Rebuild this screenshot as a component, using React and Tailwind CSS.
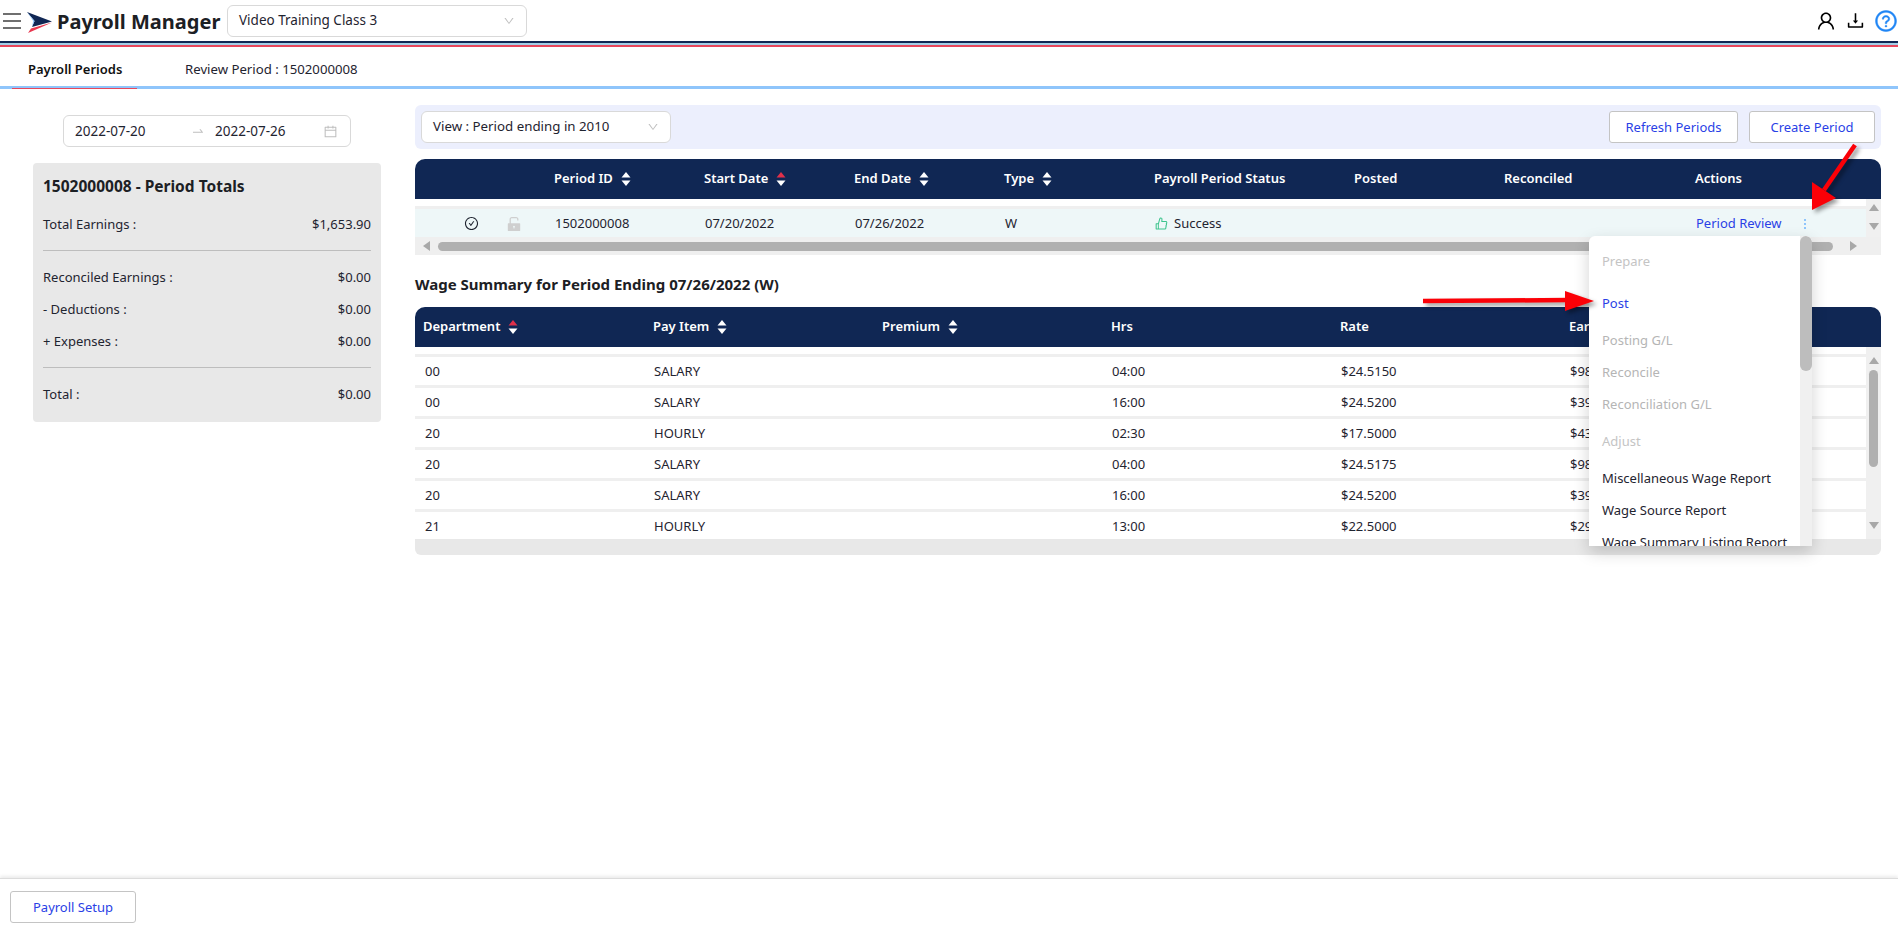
import {
  AiOutlineCalendar,
  AiOutlineCheckCircle,
  AiOutlineDown,
  AiOutlineDownload,
  AiOutlineLike,
  AiOutlineQuestionCircle,
  AiOutlineSwapRight,
  AiOutlineUser,
  AiFillUnlock,
} from 'react-icons/ai';

const wages = [
  ['00', 'SALARY', '04:00', '$24.5150', '$98.06'],
  ['00', 'SALARY', '16:00', '$24.5200', '$392.32'],
  ['20', 'HOURLY', '02:30', '$17.5000', '$43.75'],
  ['20', 'SALARY', '04:00', '$24.5175', '$98.07'],
  ['20', 'SALARY', '16:00', '$24.5200', '$392.32'],
  ['21', 'HOURLY', '13:00', '$22.5000', '$292.50'],
];

const menuItems = [
  { label: 'Prepare', cls: 'text-[#c4c4c4] h-[42px]' },
  { label: 'Post', cls: 'text-[#2a3fe6] h-[42px]' },
  { label: 'Posting G/L', cls: 'text-[#b5b5b5] h-[32px]' },
  { label: 'Reconcile', cls: 'text-[#b5b5b5] h-[32px]' },
  { label: 'Reconciliation G/L', cls: 'text-[#b5b5b5] h-[32px]' },
  { label: 'Adjust', cls: 'text-[#c4c4c4] h-[42px]' },
  { label: 'Miscellaneous Wage Report', cls: 'text-[#1f2430] h-[32px]' },
  { label: 'Wage Source Report', cls: 'text-[#1f2430] h-[32px]' },
  { label: 'Wage Summary Listing Report', cls: 'text-[#1f2430] h-[32px]' },
];

function SortIcon({ active }) {
  return (
    <svg width="10" height="14" viewBox="0 0 10 14" className="ml-2 shrink-0">
      <path d="M5 0 L9.5 5.5 H0.5 Z" fill={active ? '#e0304a' : '#ffffff'} />
      <path d="M5 14 L0.5 8.5 H9.5 Z" fill="#ffffff" />
    </svg>
  );
}

function HeadCell({ label, sort, active, className }) {
  return (
    <div className={`flex items-center pl-2 font-semibold ${className}`}>
      {label}
      {sort && <SortIcon active={active} />}
    </div>
  );
}

function Arrow({ className, x1, y1, x2, y2, w, h, head }) {
  return (
    <svg width={w} height={h} className={`absolute pointer-events-none drop-shadow-[3px_3px_2px_rgba(0,0,0,0.4)] ${className}`}>
      <line x1={x1} y1={y1} x2={x2} y2={y2} stroke="#fb0007" strokeWidth="4.5" />
      <polygon points={head} fill="#fb0007" />
    </svg>
  );
}

function ScrollArrow({ dir }) {
  const d = { up: 'M5 0 L10 7 H0 Z', down: 'M5 7 L0 0 H10 Z', left: 'M0 5 L7 0 V10 Z', right: 'M7 5 L0 0 V10 Z' }[dir];
  return (
    <svg width="10" height="10" viewBox="0 0 10 10" className="shrink-0">
      <path d={d} fill="#a8a8a8" />
    </svg>
  );
}

export default function App() {
  return (
    <div className="relative flex flex-col h-[933px] w-[1898px] overflow-hidden bg-white text-[13px] text-[#1f2430] font-['Noto_Sans',sans-serif]">
      {/* top bar */}
      <div className="flex items-center h-[41px] shrink-0">
        <div className="flex flex-col gap-[5px] ml-[3px] w-[18px]">
          <div className="h-[2px] bg-[#6f6f6f]" />
          <div className="h-[2px] bg-[#6f6f6f]" />
          <div className="h-[2px] bg-[#6f6f6f]" />
        </div>
        <svg width="25" height="21" viewBox="0 0 25 21" className="ml-[6px] mt-[3px]">
          <path d="M0 0 L25 9.5 L5 15 L7.5 9 Z" fill="#102754" />
          <path d="M1 21 L25 10.5 L4 16.5 Z" fill="#e8374f" />
          <path d="M0 0 L7.5 9 L5 15 L6.2 9 Z" fill="#8fc5fb" />
        </svg>
        <div className="ml-[5px] mt-[2px] w-[162px] text-[20px] font-bold text-[#1c2024] whitespace-nowrap">Payroll Manager</div>
        <div className="ml-[8px] flex items-center justify-between w-[300px] h-[32px] border border-[#d9d9d9] rounded-md pl-[11px] pr-[11px] text-[13.5px]">
          <span>Video Training Class 3</span>
          <AiOutlineDown className="text-[#bfbfbf] text-[12px]" />
        </div>
        <div className="ml-auto flex items-center gap-[8px]">
          <AiOutlineUser className="text-[22px] text-black" />
          <AiOutlineDownload className="text-[21px] text-black" />
          <AiOutlineQuestionCircle className="text-[24px] text-[#1f85f5] stroke-[20px]" />
        </div>
      </div>
      <div className="h-[2px] shrink-0 bg-[#102754]" />
      <div className="h-[2px] shrink-0 bg-[#a3cfe8]" />
      <div className="h-[2px] shrink-0 bg-[#e8475c]" />

      {/* tabs */}
      <div className="flex items-center h-[42px] shrink-0 border-b-[3px] border-[#8fc5fb] pt-[6px]">
        <div className="relative h-full w-[125px] ml-[12px] flex items-center pl-[16px] font-semibold text-[#111]">
          Payroll Periods
          <div className="absolute left-0 right-0 -bottom-[3px] h-px bg-[#e8475c]" />
        </div>
        <div className="ml-[48px] text-[13.2px]">Review Period : 1502000008</div>
      </div>

      {/* content */}
      <div className="flex flex-1 min-h-0">
        <div className="w-[415px] shrink-0 pt-[26px]">
          <div className="ml-[63px] w-[288px] h-[32px] flex items-center border border-[#d9d9d9] rounded-md pl-[11px] pr-[12px] text-[13.5px]">
            <span className="w-[116px]">2022-07-20</span>
            <AiOutlineSwapRight className="text-[#bfbfbf] text-[14px] mr-[10px]" />
            <span>2022-07-26</span>
            <AiOutlineCalendar className="ml-auto text-[#bfbfbf] text-[15px]" />
          </div>
          <div className="mt-[16px] ml-[33px] w-[348px] h-[259px] bg-[#e8e8e8] rounded px-[10px] pt-[11px]">
            <div className="text-[15.5px] font-bold leading-[24px] text-[#1c2024]">1502000008 - Period Totals</div>
            <div className="flex justify-between mt-[16px] leading-[20px]"><span>Total Earnings :</span><span>$1,653.90</span></div>
            <div className="h-px bg-[#bdbdbd] mt-[16px]" />
            <div className="flex justify-between mt-[16px] leading-[20px]"><span>Reconciled Earnings :</span><span>$0.00</span></div>
            <div className="flex justify-between mt-[12px] leading-[20px]"><span>- Deductions :</span><span>$0.00</span></div>
            <div className="flex justify-between mt-[12px] leading-[20px]"><span>+ Expenses :</span><span>$0.00</span></div>
            <div className="h-px bg-[#bdbdbd] mt-[16px]" />
            <div className="flex justify-between mt-[16px] leading-[20px]"><span>Total :</span><span>$0.00</span></div>
          </div>
        </div>

        <div className="w-[1466px] shrink-0 pt-[16px]">
          <div className="flex items-center h-[44px] bg-[#ecEFfd] rounded-md pl-[6px] pr-[6px]">
            <div className="flex items-center justify-between w-[250px] h-[32px] bg-white border border-[#d9d9d9] rounded-md pl-[11px] pr-[11px] text-[13.3px]">
              <span>View : Period ending in 2010</span>
              <AiOutlineDown className="text-[#bfbfbf] text-[12px]" />
            </div>
            <button className="ml-auto w-[129px] h-[32px] pt-[1px] bg-white border border-[#c4c4c4] rounded-[3px] text-[#2a3fe6]">Refresh Periods</button>
            <button className="ml-[11px] w-[126px] h-[32px] pt-[1px] bg-white border border-[#c4c4c4] rounded-[3px] text-[#2a3fe6]">Create Period</button>
          </div>

          {/* periods table */}
          <div className="mt-[10px]">
            <div className="flex items-center h-[40px] bg-[#102754] text-white rounded-t-[10px]">
              <div className="w-[131px]" />
              <HeadCell label="Period ID" sort className="w-[150px]" />
              <HeadCell label="Start Date" sort active className="w-[150px]" />
              <HeadCell label="End Date" sort className="w-[150px]" />
              <HeadCell label="Type" sort className="w-[150px]" />
              <HeadCell label="Payroll Period Status" className="w-[200px]" />
              <HeadCell label="Posted" className="w-[150px]" />
              <HeadCell label="Reconciled" className="w-[191px]" />
              <HeadCell label="Actions" className="w-[150px]" />
            </div>
            <div className="flex">
              <div className="w-[1451px] pt-[7px]">
                <div className="h-[3px] bg-[#efefef]" />
                <div className="flex items-center h-[28px] pt-[1px] bg-[#eef7f8]">
                  <div className="w-[131px] flex items-center pl-[49px] gap-[26px]">
                    <AiOutlineCheckCircle className="text-[15px]" />
                    <AiFillUnlock className="text-[18px] text-[#cfcfcf]" />
                  </div>
                  <div className="w-[150px] pl-[9px]">1502000008</div>
                  <div className="w-[150px] pl-[9px]">07/20/2022</div>
                  <div className="w-[150px] pl-[9px]">07/26/2022</div>
                  <div className="w-[150px] pl-[9px]">W</div>
                  <div className="w-[200px] pl-[8px] flex items-center gap-[5px]">
                    <AiOutlineLike className="text-[15px] text-[#3ec48e]" />
                    Success
                  </div>
                  <div className="w-[150px]" />
                  <div className="w-[191px]" />
                  <div className="flex items-center pl-[9px] text-[#2a3fe6]">
                    Period Review
                    <div className="ml-[22px] flex flex-col gap-[2px]">
                      <div className="w-[2px] h-[2px] bg-[#8fc5fb]" />
                      <div className="w-[2px] h-[2px] bg-[#8fc5fb]" />
                      <div className="w-[2px] h-[2px] bg-[#8fc5fb]" />
                    </div>
                  </div>
                </div>
              </div>
              <div className="w-[15px] flex flex-col items-center justify-center gap-[9px] bg-[#f0f0f0]">
                <ScrollArrow dir="up" />
                <ScrollArrow dir="down" />
              </div>
            </div>
            <div className="flex items-center h-[18px] bg-[#efefef] pl-[8px]">
              <ScrollArrow dir="left" />
              <div className="ml-[5px] w-[1395px] h-[9px] rounded-full bg-[#b0b0b0]" />
              <div className="ml-[17px]"><ScrollArrow dir="right" /></div>
            </div>
          </div>

          <div className="mt-[17px] h-[24px] text-[15px] font-bold leading-[24px] text-[#1c2024]">Wage Summary for Period Ending 07/26/2022 (W)</div>

          {/* wage table */}
          <div className="mt-[11px]">
            <div className="flex items-center h-[40px] bg-[#102754] text-white rounded-t-[10px]">
              <HeadCell label="Department" sort active className="w-[230px]" />
              <HeadCell label="Pay Item" sort className="w-[229px]" />
              <HeadCell label="Premium" sort className="w-[229px]" />
              <HeadCell label="Hrs" className="w-[229px]" />
              <HeadCell label="Rate" className="w-[229px]" />
              <HeadCell label="Earnings" className="w-[229px]" />
            </div>
            <div className="flex h-[192px]">
              <div className="w-[1451px] pt-[7px] overflow-hidden">
                {wages.map((w, i) => (
                  <div key={i}>
                    <div className="h-[3px] bg-[#efefef]" />
                    <div className="flex items-center h-[28px] pt-[2px]">
                      <div className="w-[229px] pl-[10px]">{w[0]}</div>
                      <div className="w-[229px] pl-[10px]">{w[1]}</div>
                      <div className="w-[229px] pl-[10px]" />
                      <div className="w-[229px] pl-[10px]">{w[2]}</div>
                      <div className="w-[229px] pl-[10px]">{w[3]}</div>
                      <div className="w-[229px] pl-[10px]">{w[4]}</div>
                    </div>
                  </div>
                ))}
              </div>
              <div className="w-[15px] flex flex-col items-center bg-[#f0f0f0] pt-[10px]">
                <ScrollArrow dir="up" />
                <div className="mt-[3px] w-[9px] h-[97px] rounded-full bg-[#b0b0b0]" />
                <div className="mt-auto mb-[7px]"><ScrollArrow dir="down" /></div>
              </div>
            </div>
            <div className="h-[16px] bg-[#e8e8e8] rounded-b-[6px]" />
          </div>
        </div>
      </div>

      {/* footer */}
      <div className="h-[55px] shrink-0 border-t border-[#dcdcdc] shadow-[0_-2px_3px_rgba(0,0,0,0.08)] pl-[10px] pt-[12px]">
        <button className="w-[126px] h-[32px] pt-[1px] bg-white border border-[#c4c4c4] rounded-[3px] text-[#2a3fe6]">Payroll Setup</button>
      </div>

      {/* row actions menu */}
      <div className="absolute left-[1589px] top-[236px] w-[223px] h-[310px] flex bg-white rounded-t-md overflow-hidden shadow-[0_6px_16px_rgba(0,0,0,0.18)] z-10">
        <div className="w-[211px] pl-[13px] pt-[5px]">
          {menuItems.map((m) => (
            <div key={m.label} className={`flex items-center whitespace-nowrap ${m.cls}`}>{m.label}</div>
          ))}
        </div>
        <div className="w-[12px] bg-[#f0f0f0]">
          <div className="h-[135px] rounded-full bg-[#bdbdbd]" />
        </div>
      </div>

      {/* annotation arrows */}
      <Arrow className="left-[1800px] top-[140px] z-20" w={70} h={80} x1={55} y1={5} x2={24} y2={50} head="12,70 12,42 36,58" />
      <Arrow className="left-[1420px] top-[285px] z-20" w={180} h={30} x1={3} y1={16} x2={150} y2={15} head="145,6 174,16 145,26" />
    </div>
  );
}
